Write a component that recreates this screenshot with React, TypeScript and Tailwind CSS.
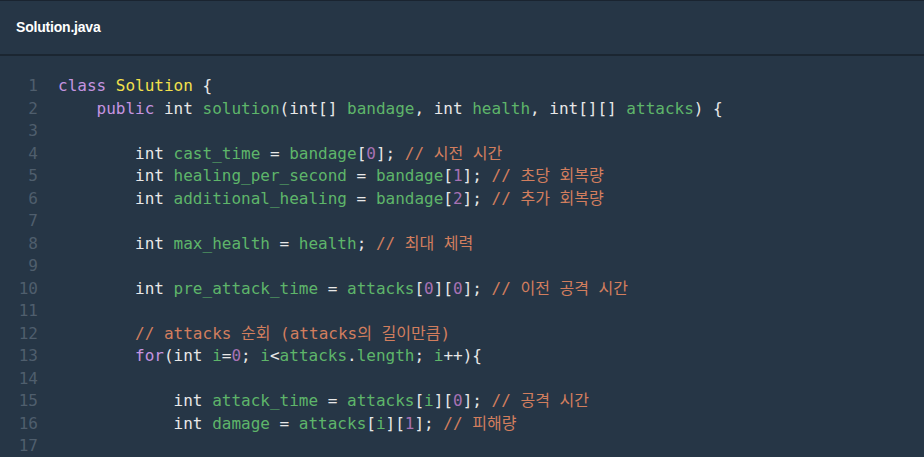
import React from "react";

type Tok = [string, string];

const K = "text-[#c594e0]"; // keyword purple
const T = "text-[#e8e8e8]"; // type / punctuation
const G = "text-[#5eb56a]"; // identifiers green
const Y = "text-[#f2e14c]"; // class name
const N = "text-[#a872b4]"; // numbers
const C = "text-[#d27e5e]"; // comments

const lines: Tok[][] = [
  [[K, "class "], [Y, "Solution"], [T, " {"]],
  [[T, "    "], [K, "public "], [T, "int "], [G, "solution"], [T, "(int[] "], [G, "bandage"], [T, ", int "], [G, "health"], [T, ", int[][] "], [G, "attacks"], [T, ") {"]],
  [],
  [[T, "        int "], [G, "cast_time"], [T, " = "], [G, "bandage"], [T, "["], [N, "0"], [T, "]; "], [C, "// 시전 시간"]],
  [[T, "        int "], [G, "healing_per_second"], [T, " = "], [G, "bandage"], [T, "["], [N, "1"], [T, "]; "], [C, "// 초당 회복량"]],
  [[T, "        int "], [G, "additional_healing"], [T, " = "], [G, "bandage"], [T, "["], [N, "2"], [T, "]; "], [C, "// 추가 회복량"]],
  [],
  [[T, "        int "], [G, "max_health"], [T, " = "], [G, "health"], [T, "; "], [C, "// 최대 체력"]],
  [],
  [[T, "        int "], [G, "pre_attack_time"], [T, " = "], [G, "attacks"], [T, "["], [N, "0"], [T, "]["], [N, "0"], [T, "]; "], [C, "// 이전 공격 시간"]],
  [],
  [[T, "        "], [C, "// attacks 순회 (attacks의 길이만큼)"]],
  [[T, "        "], [K, "for"], [T, "(int "], [G, "i"], [T, "="], [N, "0"], [T, "; "], [G, "i"], [T, "<"], [G, "attacks"], [T, "."], [G, "length"], [T, "; "], [G, "i"], [T, "++){"]],
  [],
  [[T, "            int "], [G, "attack_time"], [T, " = "], [G, "attacks"], [T, "["], [G, "i"], [T, "]["], [N, "0"], [T, "]; "], [C, "// 공격 시간"]],
  [[T, "            int "], [G, "damage"], [T, " = "], [G, "attacks"], [T, "["], [G, "i"], [T, "]["], [N, "1"], [T, "]; "], [C, "// 피해량"]],
  [],
];

export default function App() {
  return (
    <div className="w-[924px] h-[457px] overflow-hidden bg-[#263646] border-t border-[#1a2430] flex flex-col">
      <div className="h-[55px] shrink-0 flex items-center px-4 border-b-2 border-[#1b2631]">
        <span className="text-white font-bold text-[14px] font-['Liberation_Sans',Arial,sans-serif] tracking-[-0.2px]">
          Solution.java
        </span>
      </div>
      <div className="flex pt-[19px] font-['DejaVu_Sans_Mono','Noto_Sans_CJK_KR',monospace] text-[16px] leading-[22.5px]">
        <div className="w-[38px] text-right text-[#4f5e6d] select-none">
          {lines.map((_, i) => (
            <div key={i}>{i + 1}</div>
          ))}
        </div>
        <div className="pl-[20px] whitespace-pre">
          {lines.map((toks, i) => (
            <div key={i} className="h-[22.5px]">
              {toks.map(([c, s], j) => (
                <span key={j} className={c}>
                  {s}
                </span>
              ))}
            </div>
          ))}
        </div>
      </div>
    </div>
  );
}
